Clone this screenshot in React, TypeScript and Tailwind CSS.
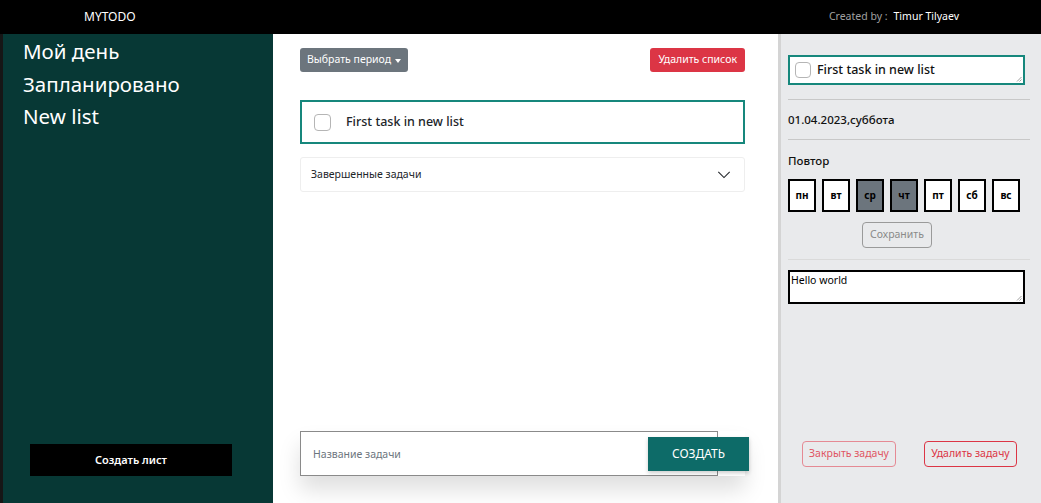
import { useState } from "react";

const days = [
  { label: "пн", on: false },
  { label: "вт", on: false },
  { label: "ср", on: true },
  { label: "чт", on: true },
  { label: "пт", on: false },
  { label: "сб", on: false },
  { label: "вс", on: false },
];

const lists = ["Мой день", "Запланировано", "New list"];

function Checkbox({ size = 17 }: { size?: number }) {
  return (
    <span
      className="inline-block shrink-0 rounded-[4px] border border-[#b5b5b5] bg-white"
      style={{ width: size, height: size }}
    />
  );
}

function Grip() {
  return (
    <svg className="absolute bottom-[1px] right-[1px]" width="6" height="6" viewBox="0 0 6 6">
      <path d="M5.5 1 1 5.5M5.5 3.5 3.5 5.5" stroke="#888" strokeWidth="0.8" />
    </svg>
  );
}

function Sidebar() {
  return (
    <aside className="flex w-[270px] shrink-0 flex-col justify-between bg-[#073835] pb-[27px] pl-[20px] pt-[1px]">
      <nav className="flex flex-col">
        {lists.map((name) => (
          <a key={name} className="cursor-pointer text-[20.5px] leading-[32.5px] text-white">
            {name}
          </a>
        ))}
      </nav>
      <button
        type="button"
        className="ml-[7px] h-[32px] w-[202px] bg-black text-[11px] font-semibold text-white"
      >
        Создать лист
      </button>
    </aside>
  );
}

function Main() {
  const [open, setOpen] = useState(false);
  return (
    <main className="flex min-w-0 flex-1 flex-col justify-between bg-white pb-[27px] pl-[27px] pr-[33px] pt-[14px]">
      <div className="flex flex-col">
        <div className="flex items-center justify-between">
          <button
            type="button"
            className="flex h-[24px] items-center gap-[4px] rounded-[3px] bg-[#6c757d] px-[7px] text-[10.5px] text-white"
          >
            Выбрать период
            <span className="mt-[1px] border-x-[3px] border-t-[4px] border-x-transparent border-t-white" />
          </button>
          <button
            type="button"
            className="h-[24px] rounded-[3px] bg-[#dc3545] px-[8px] text-[10.5px] text-white"
          >
            Удалить список
          </button>
        </div>

        <div className="mt-[28px] flex h-[44px] items-center gap-[15px] border-2 border-[#16877c] pl-[12px]">
          <Checkbox />
          <span className="text-[12.5px] font-medium text-[#212529]">First task in new list</span>
        </div>

        <button
          type="button"
          onClick={() => setOpen(!open)}
          className="mt-[13px] flex h-[35px] items-center justify-between rounded-[3px] border border-[#eeeeee] pl-[10px] pr-[13px] text-left"
        >
          <span className="text-[10.5px] text-[#212529]">Завершенные задачи</span>
          <svg width="14" height="14" viewBox="0 0 16 16" fill="none">
            <path d="M1.5 4.5 8 11l6.5-6.5" stroke="#212529" strokeWidth="1.2" />
          </svg>
        </button>
      </div>

      <form
        className="flex w-[445px] items-center shadow-[0_14px_22px_rgba(0,0,0,0.13)]"
        onSubmit={(e) => e.preventDefault()}
      >
        <input
          placeholder="Название задачи"
          className="h-[45px] w-[418px] shrink-0 border border-[#8a8a8a] bg-white pl-[12px] text-[10.5px] outline-none placeholder:text-[#6c757d]"
        />
        <button
          type="submit"
          className="relative ml-[-70px] h-[34px] w-[101px] shrink-0 bg-[#0d6b68] text-[12px] text-white shadow-[0_2px_4px_rgba(0,0,0,0.2)]"
        >
          СОЗДАТЬ
        </button>
      </form>
    </main>
  );
}

function Details() {
  return (
    <aside className="flex w-[263px] shrink-0 flex-col justify-between border-l-[3px] border-[#d4d4d4] bg-[#e9eaec] pb-[36px] pl-[7px] pr-[11px] pt-[21px]">
      <div className="flex flex-col">
        <div className="relative flex h-[30px] w-[237px] items-center gap-[6px] border-2 border-[#16877c] bg-white pl-[5px]">
          <Checkbox size={16} />
          <span className="text-[12.5px] font-medium text-[#111]">First task in new list</span>
          <Grip />
        </div>
        <div className="mt-[14px] h-px bg-[#c8c8c8]" />
        <div className="py-[11px] text-[11.5px] font-medium leading-[17px] text-[#111]">
          01.04.2023,суббота
        </div>
        <div className="h-px bg-[#c8c8c8]" />
        <div className="mt-[12px] text-[11.5px] font-medium leading-[17px] text-[#111]">Повтор</div>
        <div className="mt-[10px] flex gap-[6px]">
          {days.map((d) => (
            <span
              key={d.label}
              className={`flex h-[33px] w-[28px] items-center justify-center border-2 border-black text-[10px] font-bold text-black ${
                d.on ? "bg-[#6c757d]" : "bg-white"
              }`}
            >
              {d.label}
            </span>
          ))}
        </div>
        <button
          type="button"
          className="ml-[74px] mt-[10px] h-[26px] w-[70px] rounded-[4px] border border-[#9a9a9a] text-[10.5px] text-[#8a8a8a]"
        >
          Сохранить
        </button>
        <div className="mt-[11px] h-px bg-[#dadada]" />
        <div className="relative mt-[10px] h-[34px] w-[237px] border-2 border-black bg-white px-[1px] text-[10.5px] leading-[16px] text-black">
          Hello world
          <Grip />
        </div>
      </div>

      <div className="flex gap-[28px] pl-[14px]">
        <button
          type="button"
          className="h-[26px] w-[94px] rounded-[4px] border border-[#e58a94] text-[10.5px] text-[#e05563]"
        >
          Закрыть задачу
        </button>
        <button
          type="button"
          className="h-[26px] w-[93px] rounded-[4px] border border-[#dc3545] text-[10.5px] text-[#dc3545]"
        >
          Удалить задачу
        </button>
      </div>
    </aside>
  );
}

export default function App() {
  return (
    <div
      className="flex h-[503px] w-[1041px] flex-col overflow-hidden"
      style={{ fontFamily: '"Noto Sans", "Open Sans", sans-serif' }}
    >
      <header className="flex h-[34px] items-center justify-between bg-black pl-[84px] pr-[82px]">
        <span className="text-[12px] text-white">MYTODO</span>
        <span className="text-[10.5px] text-[#a0a0a0]">
          Created by :<span className="ml-[6px] text-white">Timur Tilyaev</span>
        </span>
      </header>
      <div className="flex flex-1">
        <div className="w-[3px] shrink-0 bg-[#161616]" />
        <Sidebar />
        <Main />
        <Details />
      </div>
    </div>
  );
}
